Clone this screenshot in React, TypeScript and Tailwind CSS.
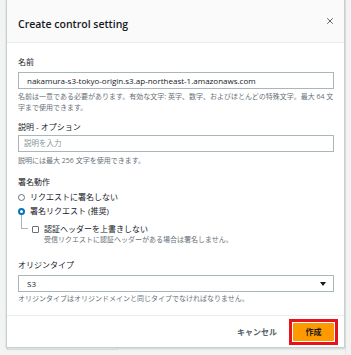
import { X } from "lucide-react";

const font = { fontFamily: '"Open Sans", "Noto Sans CJK JP", sans-serif' };

const Label = ({ children, className = "" }: { children: React.ReactNode; className?: string }) => (
    <div className={`text-[8px] leading-[11px] text-[#16191f] ${className}`}>{children}</div>
);

const Help = ({ children, className = "" }: { children: React.ReactNode; className?: string }) => (
    <p className={`text-[7px] leading-[11px] text-[#687078] ${className}`}>{children}</p>
);

export default function App() {
    return (
        <div style={font} className="relative h-[355px] w-[351px] overflow-hidden bg-[#f2f3f3] pl-[6px]">
            {/* page behind the dialog */}
            <div className="absolute left-[7px] top-[340px] h-[10px] w-[111px] border border-[#e3e6e6] bg-[#f8f8f8]" />
            <div className="absolute left-[345px] top-0 h-full w-[1px] bg-[#e6e8e8]" />

            <div className="relative w-[339px] border-x border-b border-[#c9cfcf] bg-white shadow-[0_1px_2px_rgba(0,0,0,0.15)]">
                {/* header */}
                <div className="flex h-[43px] items-start justify-between border-b border-[#eaeded] bg-[#fafafa] pl-[11px] pr-[9px]">
                    <h2 className="mt-[17px] text-[10.5px] font-semibold leading-[14px] text-[#16191f]">Create control setting</h2>
                    <X className="mt-[16px] size-[10px] text-[#414750]" strokeWidth={2} />
                </div>

                {/* body */}
                <div className="flex flex-col pl-[11px] pr-[10px] pt-[13px] pb-[11px]">
                    <Label className="mb-[5px]">名前</Label>
                    <div className="flex h-[17px] items-center border border-[#aab7b8] px-[8px] text-[8px] text-[#16191f]">
                        nakamura-s3-tokyo-origin.s3.ap-northeast-1.amazonaws.com
                    </div>
                    <Help className="mt-[2px]">
                        名前は一意である必要があります。有効な文字: 英字、数字、およびほとんどの特殊文字。最大 64 文字まで使用できます。
                    </Help>

                    <Label className="mt-[8px] mb-[3px]">説明 - オプション</Label>
                    <div className="flex h-[17px] items-center border border-[#aab7b8] px-[5px] text-[7.5px] text-[#879596]">
                        説明を入力
                    </div>
                    <Help className="mt-[3px]">説明には最大 256 文字を使用できます。</Help>

                    <Label className="mt-[10px]">署名動作</Label>
                    <div className="mt-[4px] flex h-[12px] items-center gap-[5px]">
                        <span className="size-[7px] rounded-full border border-[#687078]" />
                        <span className="text-[8px] text-[#16191f]">リクエストに署名しない</span>
                    </div>
                    <div className="relative mt-[2px] flex h-[12px] items-center gap-[5px]">
                        <span className="size-[7px] rounded-full border-[2px] border-[#0073bb] bg-white" />
                        <span className="text-[8px] text-[#16191f]">署名リクエスト (推奨)</span>
                        {/* tree connector */}
                        <span className="absolute left-[3px] top-[10px] h-[14px] w-[7px] border-b border-l border-[#aab7b8]" />
                    </div>
                    <div className="ml-[14px] mt-[6px] flex h-[12px] items-center gap-[5px]">
                        <span className="size-[7px] rounded-[1px] border border-[#687078]" />
                        <span className="text-[8px] text-[#16191f]">認証ヘッダーを上書きしない</span>
                    </div>
                    <Help className="ml-[26px] -mt-[1px]">受信リクエストに認証ヘッダーがある場合は署名しません。</Help>

                    <Label className="mt-[14px] mb-[5px]">オリジンタイプ</Label>
                    <div className="flex h-[17px] items-center justify-between border border-[#aab7b8] pl-[8px] pr-[7px] text-[8px] text-[#16191f]">
                        <span>S3</span>
                        <svg width="6" height="4" viewBox="0 0 6 4">
                            <path d="M0 0h6L3 4z" fill="#16191f" />
                        </svg>
                    </div>
                    <Help className="mt-[1px]">オリジンタイプはオリジンドメインと同じタイプでなければなりません。</Help>
                </div>

                {/* footer */}
                <div className="flex h-[32px] items-center justify-end gap-[12px] border-t border-[#eaeded] pr-[6px]">
                    <button className="text-[8px] font-bold text-[#545b64]">キャンセル</button>
                    <span className="border-[3px] border-[#e8121c] px-[1px] py-[1px]">
                        <button className="flex h-[18px] w-[41px] items-center justify-center rounded-[1px] bg-[#ff9900] text-[8px] font-bold text-[#16191f]">
                            作成
                        </button>
                    </span>
                </div>
            </div>
        </div>
    );
}
